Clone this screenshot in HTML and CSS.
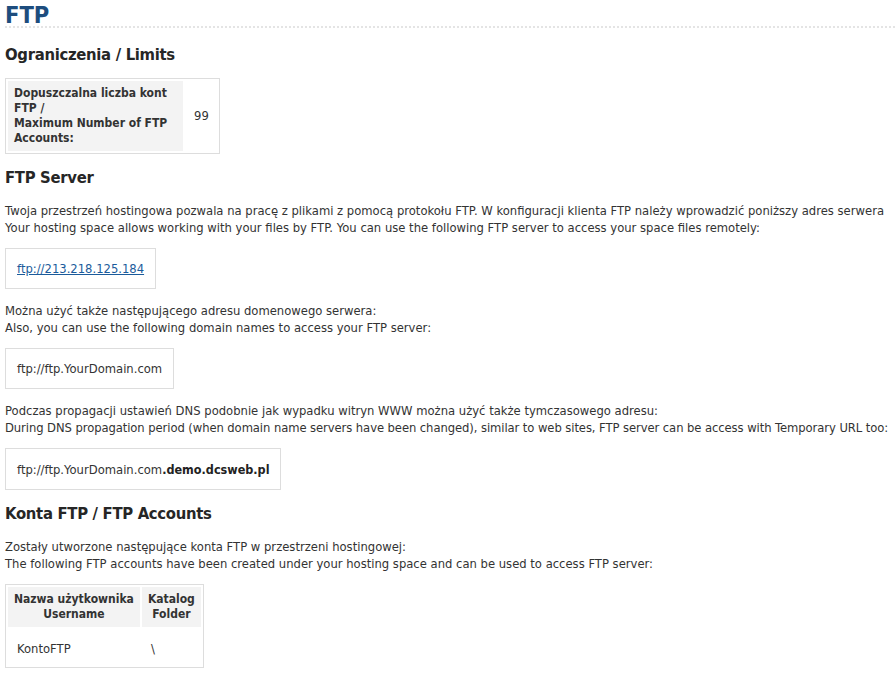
FILE: index.html
```html
<!DOCTYPE html>
<html lang="pl">
<head>
<meta charset="utf-8">
<title>FTP</title>
<link rel="stylesheet" href="styles.css">
</head>
<body>
<h1 class="page-title">FTP</h1>

<h2 class="section-title">Ograniczenia / Limits</h2>
<table class="data-table limits">
  <tr>
    <th class="th-left">Dopuszczalna liczba kont FTP /<br>Maximum Number of FTP Accounts:</th>
    <td class="td-value">99</td>
  </tr>
</table>

<h2 class="section-title">FTP Server</h2>
<p class="text">Twoja przestrzeń hostingowa pozwala na pracę z plikami z pomocą protokołu FTP. W konfiguracji klienta FTP należy wprowadzić poniższy adres serwera<br>Your hosting space allows working with your files by FTP. You can use the following FTP server to access your space files remotely:</p>
<div class="box"><a class="link" href="#">ftp://213.218.125.184</a></div>

<p class="text">Można użyć także następującego adresu domenowego serwera:<br>Also, you can use the following domain names to access your FTP server:</p>
<div class="box">ftp://ftp.YourDomain.com</div>

<p class="text">Podczas propagacji ustawień DNS podobnie jak wypadku witryn WWW można użyć także tymczasowego adresu:<br><span class="fit">During DNS propagation period (when domain name servers have been changed), similar to web sites, FTP server can be access with Temporary URL too:</span></p>
<div class="box">ftp://ftp.YourDomain.com<b class="strong">.demo.dcsweb.pl</b></div>

<h2 class="section-title">Konta FTP / FTP Accounts</h2>
<p class="text">Zostały utworzone następujące konta FTP w przestrzeni hostingowej:<br>The following FTP accounts have been created under your hosting space and can be used to access FTP server:</p>
<table class="data-table accounts">
  <tr>
    <th class="th-head">Nazwa użytkownika<br>Username</th>
    <th class="th-head">Katalog<br>Folder</th>
  </tr>
  <tr>
    <td class="td-cell">KontoFTP</td>
    <td class="td-cell">\</td>
  </tr>
</table>
</body>
</html>
```

FILE: styles.css
```css
html, body {
  margin: 0;
  padding: 0;
  background: #ffffff;
}
body {
  padding: 0 0 0 5px;
  font-family: "DejaVu Sans", Verdana, sans-serif;
  font-size: 11.6px;
  color: #333333;
}
.page-title {
  margin: 0 0 17px;
  padding-top: 4px;
  font-family: "DejaVu Sans Condensed", "DejaVu Sans", sans-serif;
  font-size: 23.5px;
  line-height: 22px;
  font-weight: bold;
  color: #1d4d7e;
  border-bottom: 2px dotted #e4e4e4;
}
.section-title {
  margin: 14px 0 15px;
  font-family: "DejaVu Sans Condensed", "DejaVu Sans", sans-serif;
  font-size: 16.5px;
  letter-spacing: -0.3px;
  line-height: 20px;
  font-weight: bold;
  color: #262626;
}
.text {
  margin: 0 0 12px;
  line-height: 16.5px;
  white-space: nowrap;
}
.fit {
  letter-spacing: -0.08px;
}
.data-table {
  border: 1px solid #dddddd;
  border-spacing: 2px;
  margin: 0;
  font-size: 11.6px;
  color: #333333;
}
.limits {
  margin-top: -2px;
}
.th-left {
  background: #f3f3f3;
  text-align: left;
  padding: 5px 6px;
  line-height: 15px;
  width: 163px;
  font-family: "DejaVu Sans Condensed", "DejaVu Sans", sans-serif;
  font-size: 12px;
  font-weight: bold;
}
.td-value {
  padding: 5px 8px 5px 9px;
}
.box {
  width: fit-content;
  border: 1px solid #dddddd;
  padding: 12px 11px 10px;
  margin: 0 0 14px;
  line-height: 17px;
}
.strong {
  font-family: "DejaVu Sans Condensed", "DejaVu Sans", sans-serif;
  font-size: 12.5px;
  font-weight: bold;
  color: #222222;
}
.link {
  color: #1b5b9b;
  text-decoration: underline;
}
.th-head {
  background: #f3f3f3;
  padding: 5px 6px;
  line-height: 15px;
  text-align: center;
  font-family: "DejaVu Sans Condensed", "DejaVu Sans", sans-serif;
  font-size: 12px;
  font-weight: bold;
}
.td-cell {
  padding: 12px 9px 7px;
  line-height: 17px;
  text-align: left;
}
```
